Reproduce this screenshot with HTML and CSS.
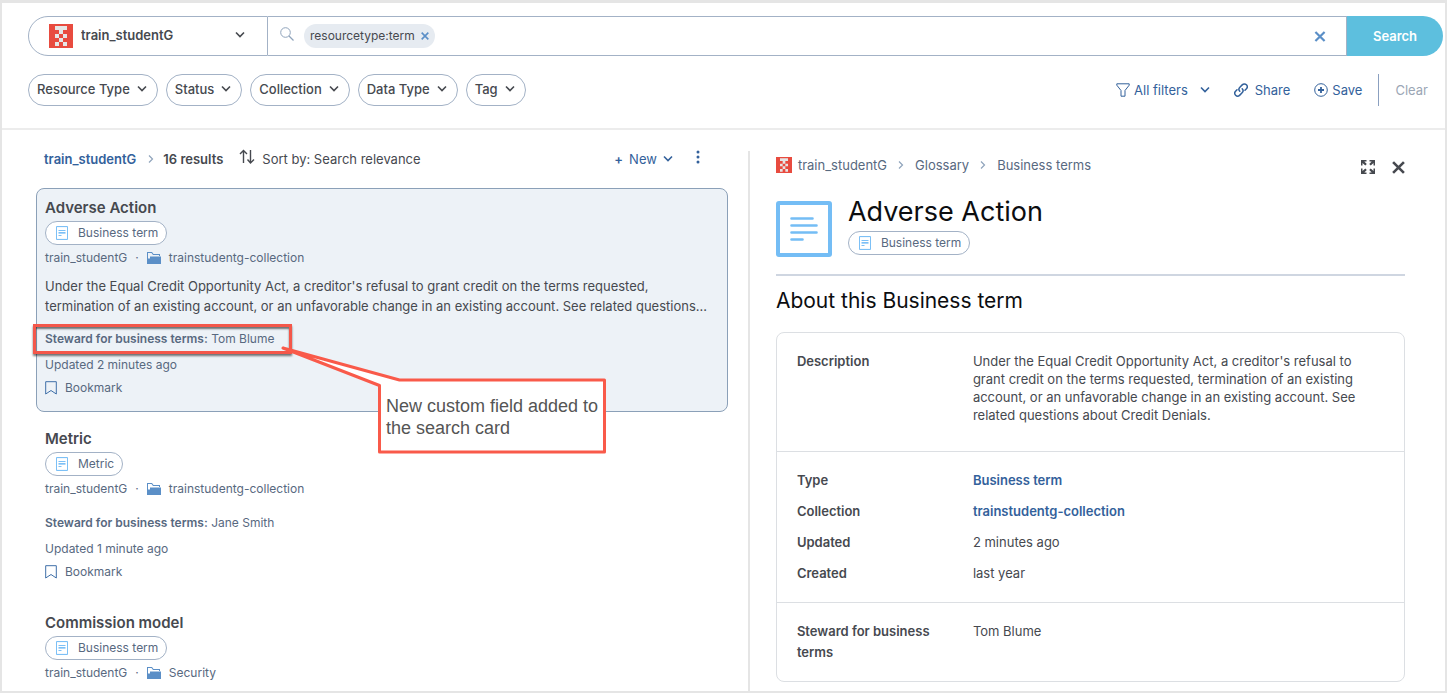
FILE: index.html
```html
<!DOCTYPE html>
<html lang="en">
<head>
<meta charset="utf-8">
<meta name="viewport" content="width=device-width, initial-scale=1">
<title>Search results</title>
<link rel="stylesheet" href="styles.css">
</head>
<body>
<svg class="sprite" aria-hidden="true">
  <symbol id="avatar" viewBox="0 0 12 12"><path fill="#e84b3f" d="M0 0h12v12H0z"/><path fill="#e6e6e6" d="M3 1h6v2H3zM5 3h2v2H5zM3 5h2v2H3zM7 5h2v2H7zM5 7h2v2H5zM3 9h2v2H3zM7 9h2v2H7z"/></symbol>
  <symbol id="chevron" viewBox="0 0 10 10"><path fill="none" stroke="currentColor" stroke-width="1.6" d="M1 2.500l4 4 4-4"/></symbol>
  <symbol id="right" viewBox="0 0 6 10"><path fill="none" stroke="currentColor" stroke-width="1.2" d="M1 1.500l3.500 3.500L1 8.500"/></symbol>
  <symbol id="cross" viewBox="0 0 12 12"><path fill="none" stroke="currentColor" stroke-width="2.400" d="M1 1l10 10M11 1L1 11"/></symbol>
  <symbol id="note" viewBox="0 0 14 14"><path fill="#e3f1fd" d="M1 .5h12v13H1z"/><path fill="#fff" d="M2 1.500h10v11H2z"/><path fill="none" stroke="#7cc0f6" d="M1.500 .5h11v13h-11z"/><path stroke="#7cc0f6" d="M3.500 4.500h7M3.500 6.500h7M3.500 9.500h3"/><path stroke="#a9d5f9" d="M3.500 7.500h7"/></symbol>
  <symbol id="folder" viewBox="0 0 14 12"><path fill="#5b8fc7" d="M0 0h5l1.500 2H13v2h-1V3H6L4.500 1H1v10H0z"/><path fill="#5b8fc7" d="M3 4.500h11V12H0v-1.500h1V6.500h2z"/></symbol>
  <symbol id="bookmark" viewBox="0 0 12 14"><path fill="none" stroke="#3f6fa8" d="M.7 .7h10.600v12.300L6 9.500 .7 13z"/></symbol>
</svg>
<header class="header">
  <form class="search" role="search">
    <div class="scope">
      <svg class="scope-avatar"><use href="#avatar"/></svg>
      <select class="scope-select" aria-label="Organization"><option>train_studentG</option></select>
      <svg class="chevron scope-chevron"><use href="#chevron"/></svg>
    </div>
    <div class="query">
      <svg class="magnifier" viewBox="0 0 14 14"><circle cx="5.500" cy="5.500" r="4.800" fill="none" stroke="currentColor"/><path d="M9 9l4.500 4.500" stroke="currentColor" stroke-width="1.200"/></svg>
      <span class="chip">resourcetype:term <button class="plain chip-close" type="button" aria-label="Remove filter"><svg><use href="#cross"/></svg></button></span>
      <input class="query-input" type="text" aria-label="Search">
      <button class="plain query-clear" type="button" aria-label="Clear search"><svg><use href="#cross"/></svg></button>
    </div>
    <button class="search-button" type="submit">Search</button>
  </form>
  <div class="toolbar">
    <div class="filters">
      <button class="pill">Resource Type <svg class="chevron"><use href="#chevron"/></svg></button>
      <button class="pill">Status <svg class="chevron"><use href="#chevron"/></svg></button>
      <button class="pill">Collection <svg class="chevron"><use href="#chevron"/></svg></button>
      <button class="pill">Data Type <svg class="chevron"><use href="#chevron"/></svg></button>
      <button class="pill">Tag <svg class="chevron"><use href="#chevron"/></svg></button>
    </div>
    <div class="actions">
      <button class="plain action"><svg class="icon14" viewBox="0 0 14 14"><path fill="none" stroke="currentColor" d="M.8 .8h12.400v1.400L9 7.500v5.700H5V7.500L.8 2.200z"/></svg>All filters <svg class="chevron all-chevron"><use href="#chevron"/></svg></button>
      <button class="plain action share"><svg class="icon14" viewBox="0 0 14 14"><g fill="none" stroke="currentColor" stroke-width="1.500" stroke-linecap="round"><path d="M5.800 8.300C4.600 7 4.800 5.300 5.900 4.200L8.200 1.900C9.400 .7 11.300 .7 12.400 1.800s1.100 2.800 0 4L11 7.200"/><path d="M8.200 5.700C9.400 7 9.200 8.700 8.100 9.800L5.800 12.100C4.600 13.300 2.700 13.300 1.600 12.200s-1.100-2.800 0-4L3 6.800"/></g></svg>Share</button>
      <button class="plain action"><svg class="icon14" viewBox="0 0 14 14"><circle cx="7" cy="7" r="6.300" fill="none" stroke="currentColor"/><path stroke="currentColor" stroke-width="1.800" d="M4 7h6M7 4v6"/></svg>Save</button>
      <button class="plain action clear" disabled>Clear</button>
    </div>
  </div>
</header>
<main class="main">
  <section class="results">
    <div class="results-bar">
      <a class="org" href="#">train_studentG</a>
      <svg class="right"><use href="#right"/></svg>
      <strong class="count">16 results</strong>
      <button class="plain sort"><svg class="sort-icon" viewBox="0 0 16 16"><path fill="none" stroke="currentColor" stroke-width="1.400" d="M4.500 14V1.500M1 5l3.500-3.500L8 5M11.500 1v13M8.500 10.500l3 3.500 3.500-3.500"/></svg>Sort by: Search relevance</button>
      <button class="plain new"><span class="plus">+</span> New <svg class="chevron"><use href="#chevron"/></svg></button>
      <button class="plain more" aria-label="More"><svg viewBox="0 0 4 14"><g fill="currentColor"><circle cx="2" cy="2" r="1.500"/><circle cx="2" cy="7" r="1.500"/><circle cx="2" cy="12" r="1.500"/></g></svg></button>
    </div>
    <div class="cards">
      <article class="card selected">
        <h2 class="card-title">Adverse Action</h2>
        <span class="badge"><svg><use href="#note"/></svg>Business term</span>
        <div class="location">train_studentG <span>·</span> <svg><use href="#folder"/></svg><a href="#">trainstudentg-collection</a></div>
        <p class="summary">Under the Equal Credit Opportunity Act, a creditor's refusal to grant credit on the terms requested,<br>termination of an existing account, or an unfavorable change in an existing account. See related questions...</p>
        <p class="steward highlighted"><b>Steward for business terms:</b> Tom Blume</p>
        <p class="updated">Updated 2 minutes ago</p>
        <button class="plain bookmark"><svg><use href="#bookmark"/></svg>Bookmark</button>
        <div class="callout">
          <svg class="callout-shape" viewBox="0 0 326 108"><path fill="#fff" stroke="#f95a4a" stroke-width="3" stroke-linejoin="round" d="M2 2L118.500 34H323.500V106H98.500V39.500z"/></svg>
          <p class="callout-text">New custom field added to<br>the search card</p>
        </div>
      </article>
      <article class="card">
        <h2 class="card-title">Metric</h2>
        <span class="badge"><svg><use href="#note"/></svg>Metric</span>
        <div class="location">train_studentG <span>·</span> <svg><use href="#folder"/></svg><a href="#">trainstudentg-collection</a></div>
        <p class="steward"><b>Steward for business terms:</b> Jane Smith</p>
        <p class="updated">Updated 1 minute ago</p>
        <button class="plain bookmark"><svg><use href="#bookmark"/></svg>Bookmark</button>
      </article>
      <article class="card last">
        <h2 class="card-title">Commission model</h2>
        <span class="badge"><svg><use href="#note"/></svg>Business term</span>
        <div class="location">train_studentG <span>·</span> <svg><use href="#folder"/></svg><a href="#">Security</a></div>
      </article>
    </div>
  </section>
  <section class="detail">
    <nav class="crumbs" aria-label="Breadcrumb">
      <svg class="crumb-avatar"><use href="#avatar"/></svg>
      <a href="#">train_studentG</a><svg class="right"><use href="#right"/></svg>
      <a href="#">Glossary</a><svg class="right"><use href="#right"/></svg>
      <a href="#">Business terms</a>
      <button class="plain expand" aria-label="Expand"><svg viewBox="0 0 14 14"><g fill="currentColor"><path id="arrow" d="M0 0h5.500v1.500H3.300l2.500 2.600-1.500 1.500L1.500 3v2.500H0z"/><use href="#arrow" transform="matrix(-1 0 0 1 14 0)"/><use href="#arrow" transform="matrix(1 0 0 -1 0 14)"/><use href="#arrow" transform="matrix(-1 0 0 -1 14 14)"/></g></svg></button>
      <button class="plain close" aria-label="Close"><svg><use href="#cross"/></svg></button>
    </nav>
    <div class="heading">
      <svg class="heading-icon" viewBox="0 0 56 56"><rect x="2" y="2" width="52" height="52" rx="1" fill="#fff" stroke="#74bdf5" stroke-width="4"/><path stroke="#74bdf5" stroke-width="2.600" stroke-linecap="round" d="M15.500 17.500h21M15.500 24.500h25M15.500 31.500h25M15.500 38.500h11"/></svg>
      <div>
        <h1 class="title">Adverse Action</h1>
        <span class="badge"><svg><use href="#note"/></svg>Business term</span>
      </div>
    </div>
    <h2 class="about">About this Business term</h2>
    <div class="facts">
      <dl class="group description">
        <dt>Description</dt><dd>Under the Equal Credit Opportunity Act, a creditor's refusal to grant credit on the terms requested, termination of an existing account, or an unfavorable change in an existing account. See related questions about Credit Denials.</dd>
      </dl>
      <dl class="group">
        <dt>Type</dt><dd><a href="#">Business term</a></dd>
        <dt>Collection</dt><dd><a href="#">trainstudentg-collection</a></dd>
        <dt>Updated</dt><dd>2 minutes ago</dd>
        <dt>Created</dt><dd>last year</dd>
      </dl>
      <dl class="group custom">
        <dt>Steward for business terms</dt><dd>Tom Blume</dd>
      </dl>
    </div>
  </section>
</main>
</body>
</html>
```

FILE: styles.css
```css
* { box-sizing: border-box; }
body {
  margin: 0;
  min-height: 100vh;
  display: flex;
  flex-direction: column;
  border: 2px solid #e5e5e5;
  border-top-width: 3px;
  background: #fff;
  color: #46494f;
  font: 13px/20px Inter, "Liberation Sans", sans-serif;
}
h1, h2, p, dl, dd { margin: 0; }
a { color: inherit; text-decoration: none; }
button, select, input { font: inherit; color: inherit; }
svg { flex: none; display: block; }
.sprite { position: absolute; width: 0; height: 0; }
.plain { border: 0; padding: 0; background: none; display: flex; align-items: center; }
.chevron { width: 10px; height: 10px; }
.right { width: 6px; height: 10px; color: #8fa3bb; }

.header { padding: 13px 2px 22px 26px; border-bottom: 2px solid #ececec; }
.search { display: flex; height: 40px; }
.scope {
  position: relative;
  width: 240px;
  display: flex;
  align-items: center;
  border: 1px solid #a3b2c6;
  border-radius: 20px 0 0 20px;
}
.scope-avatar { position: absolute; left: 20px; width: 24px; height: 24px; pointer-events: none; }
.scope-select {
  appearance: none;
  width: 100%;
  height: 38px;
  padding: 0 40px 2px 52px;
  border: 0;
  border-radius: 20px 0 0 20px;
  background: transparent;
  font-weight: 600;
}
.scope-chevron { position: absolute; right: 22px; top: 13px; pointer-events: none; }
.query {
  flex: 1;
  display: flex;
  align-items: center;
  border: solid #a3b2c6;
  border-width: 1px 1px 1px 0;
  padding: 0 20px 0 12px;
}
.magnifier { width: 14px; height: 14px; color: #8fa3bb; margin: 0 10px 4px 0; }
.chip {
  display: flex;
  align-items: center;
  gap: 6px;
  height: 24px;
  padding: 0 6px;
  border-radius: 12px;
  background: #e6ebf1;
  font-size: 12px;
}
.chip-close svg { width: 8px; height: 8px; }
.chip-close, .query-clear { color: #5b8fc7; }
.query-input { flex: 1; min-width: 0; border: 0; outline: 0; background: none; }
.query-clear svg { width: 12px; height: 11px; }
.search-button {
  width: 96px;
  border: 0;
  border-radius: 0 20px 20px 0;
  background: #5dbfde;
  color: #fff;
  font-weight: 600;
}
.toolbar { display: flex; justify-content: space-between; margin-top: 18px; }
.filters { display: flex; gap: 8px; }
.pill {
  display: flex;
  align-items: center;
  gap: 7px;
  height: 32px;
  padding: 0 10px 2px 8px;
  border: 1px solid #a3b2c6;
  border-radius: 16px;
  background: #fff;
  font-weight: 500;
}
.actions { display: flex; gap: 24px; color: #33619b; }
.action { gap: 4px; color: inherit; height: 32px; }
.share { gap: 7px; }
.icon14 { width: 14px; height: 14px; }
.all-chevron { margin-left: 8px; }
.clear { color: #9ba6b5; border-left: 1px solid #8ba0c0; padding: 0 15px 0 16px; margin-left: -8px; }

.main { flex: 1; display: grid; grid-template-columns: minmax(0, 107fr) minmax(0, 100fr); padding-top: 21px; }
.results { padding: 0 20px 0 34px; }
.results-bar { display: flex; align-items: center; height: 16px; padding: 0 28px 0 8px; }
.org { color: #33619b; font-weight: 600; margin-right: 12px; }
.count { font-weight: 600; margin: 0 16px 0 9px; }
.sort { gap: 7px; }
.sort-icon { width: 16px; height: 16px; margin-bottom: 4px; }
.new { margin-left: auto; color: #33619b; gap: 6px; }
.plus { font-weight: 600; }
.more { margin-left: 23px; color: #33619b; }
.more svg { width: 4px; height: 14px; margin-bottom: 4px; }
.cards { display: flex; flex-direction: column; gap: 7px; margin-top: 21px; }
.card {
  position: relative;
  display: flex;
  flex-direction: column;
  align-items: flex-start;
  padding: 9px 8px 13px;
  border: 1px solid transparent;
  border-radius: 8px;
  color: #58697f;
  font-size: 12px;
}
.last { padding-bottom: 4px; }
.selected { background: #edf2f7; border-color: #8ba0b8; }
.card-title { font-size: 15px; line-height: 20px; font-weight: 600; color: #46494f; margin-bottom: 3px; }
.badge {
  display: inline-flex;
  align-items: center;
  gap: 9px;
  height: 24px;
  padding: 0 8px 0 9px;
  border: 1px solid #a3b2c6;
  border-radius: 12px;
  background: #fff;
  color: #58697f;
  font-size: 12px;
}
.badge svg { width: 14px; height: 14px; }
.location { display: flex; align-items: center; gap: 8px; margin-top: 3px; }
.location svg { width: 14px; height: 12px; }
.summary { margin-top: 8px; font-size: 13px; color: #46494f; white-space: nowrap; }
.steward { margin-top: 14px; }
.steward b { font-weight: 600; }
.highlighted { position: relative; margin-top: 13px; }
.highlighted::after {
  content: "";
  position: absolute;
  inset: -5px -18px -5px -12px;
  border: 3px solid #f4574a;
  box-shadow: 0 2px 2px #0008, inset 0 2px 2px #0008;
}
.updated { margin-top: 6px; }
.bookmark { margin-top: 3px; gap: 8px; }
.bookmark svg { width: 12px; height: 14px; }
.callout { position: absolute; left: 244px; top: 157px; width: 326px; height: 108px; z-index: 1; }
.callout-shape { width: 326px; height: 108px; }
.callout-text {
  position: absolute;
  left: 105px;
  top: 49px;
  color: #555;
  font: 18px/22px "Liberation Sans", Arial, sans-serif;
  white-space: nowrap;
}

.detail { border-left: 2px solid #e5e5e5; padding: 0 40px 8px 26px; }
.crumbs { display: flex; align-items: center; gap: 11px; height: 28px; color: #58697f; }
.crumb-avatar { width: 16px; height: 16px; margin-right: -5px; }
.crumbs button { padding-top: 4px; color: #46494f; }
.expand { margin-left: auto; }
.expand svg { width: 14px; height: 14px; }
.close { margin-left: 6px; }
.close svg { width: 13px; height: 13px; }
.heading { display: flex; gap: 16px; padding: 22px 0 17px; border-bottom: 2px solid #cfd6e1; }
.heading-icon { width: 56px; height: 56px; }
.title { font-size: 27px; line-height: 28px; font-weight: 400; color: #0c0d10; margin: -3px 0 5px; }
.about { font-size: 21px; line-height: 28px; font-weight: 400; color: #0c0d10; margin: 11px 0 17px; }
.facts { border: 1px solid #dcdfe3; border-radius: 8px; }
.group { display: grid; grid-template-columns: 144px minmax(0, 1fr); gap: 11px 32px; padding: 18px 20px 19px; }
.group + .group { border-top: 1px solid #dcdfe3; }
.group dt { font-weight: 600; }
.group a { color: #33619b; font-weight: 600; }
.description { line-height: 18px; padding: 19px 20px 27px; }
.custom { padding-bottom: 18px; line-height: 21px; }
```
